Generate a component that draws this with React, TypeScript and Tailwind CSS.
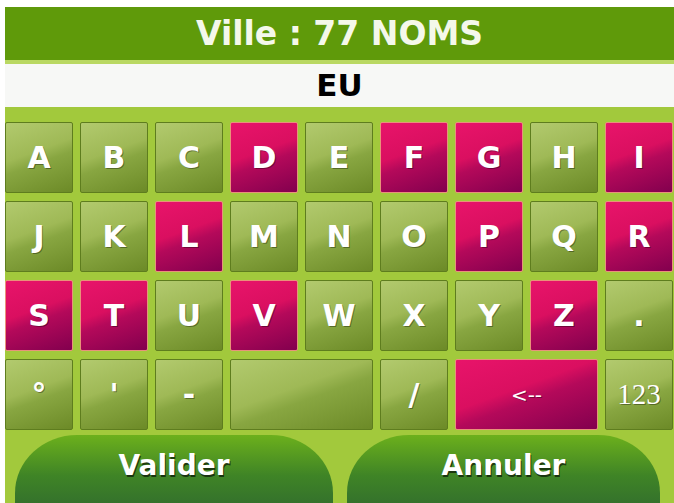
type Key = { label: string; pink?: boolean; span?: number; kind?: "small" | "serif" | "mark" };

const rows: Key[] = [
  { label: "A" },
  { label: "B" },
  { label: "C" },
  { label: "D", pink: true },
  { label: "E" },
  { label: "F", pink: true },
  { label: "G", pink: true },
  { label: "H" },
  { label: "I", pink: true },
  { label: "J" },
  { label: "K" },
  { label: "L", pink: true },
  { label: "M" },
  { label: "N" },
  { label: "O" },
  { label: "P", pink: true },
  { label: "Q" },
  { label: "R", pink: true },
  { label: "S", pink: true },
  { label: "T", pink: true },
  { label: "U" },
  { label: "V", pink: true },
  { label: "W" },
  { label: "X" },
  { label: "Y" },
  { label: "Z", pink: true },
  { label: "." },
  { label: "°", kind: "mark" },
  { label: "'", kind: "mark" },
  { label: "-" },
  { label: "", span: 2 },
  { label: "/" },
  { label: "<--", pink: true, span: 2, kind: "small" },
  { label: "123", kind: "serif" },
];

function KeyButton({ k }: { k: Key }) {
  const color = k.pink
    ? "border-[#e8937a] bg-[linear-gradient(160deg,#e8146a_0%,#da0f60_42%,#b4095a_56%,#82004e_100%)]"
    : "border-[#5e7d1e] bg-[linear-gradient(160deg,#b2ca6e_0%,#9fb956_42%,#88a641_56%,#6c8a27_100%)]";
  let text = "text-[30px] font-bold";
  if (k.kind === "serif") text = "font-['Liberation_Serif',serif] text-[29px] font-normal";
  if (k.kind === "small") text = "text-[20px] font-normal";
  if (k.kind === "mark") text = "text-[30px] font-bold";
  return (
    <button
      type="button"
      className={`${color} ${k.span === 2 ? "col-span-2" : ""} flex h-[71px] shrink-0 items-center justify-center rounded-[2px] border text-white [text-shadow:1px_1px_0_rgba(0,0,0,0.35)] ${text}`}>
      {k.label}
    </button>
  );
}

export default function App() {
  return (
    <div className="h-[503px] w-[674px] overflow-hidden bg-white pt-[7px] pl-[5px] font-['DejaVu_Sans',sans-serif]">
      <div className="flex h-[496px] flex-col overflow-hidden bg-[#a2c93c]">
        <div className="flex h-[53px] shrink-0 items-center justify-center bg-[#5f9a0a] text-[33px] font-bold text-[#f4f8ea]">
          Ville : 77 NOMS
        </div>
        <div className="h-[4px] shrink-0 bg-[#b9d862]" />
        <div className="flex h-[43px] shrink-0 items-center justify-center bg-[#f7f8f6] text-[31px] font-bold text-black">
          EU
        </div>
        <div className="grid shrink-0 grid-cols-[repeat(9,68px)] gap-x-[7px] gap-y-[8px] pt-[15px]">
          {rows.map((k, i) => (
            <KeyButton key={i} k={k} />
          ))}
        </div>
        <div className="mt-[5px] flex shrink-0 gap-[14px] pl-[10px]">
          <button
            type="button"
            className="h-[90px] w-[318px] shrink-0 rounded-t-[62px_58px] bg-[linear-gradient(to_bottom,#6cb01c,#3f8426_45%,#2c6430)] pb-[28px] text-[28px] font-bold text-white [text-shadow:1px_2px_0_rgba(0,0,0,0.6)]">
            Valider
          </button>
          <button
            type="button"
            className="h-[90px] w-[313px] shrink-0 rounded-t-[62px_58px] bg-[linear-gradient(to_bottom,#6cb01c,#3f8426_45%,#2c6430)] pb-[28px] text-[28px] font-bold text-white [text-shadow:1px_2px_0_rgba(0,0,0,0.6)]">
            Annuler
          </button>
        </div>
      </div>
    </div>
  );
}
